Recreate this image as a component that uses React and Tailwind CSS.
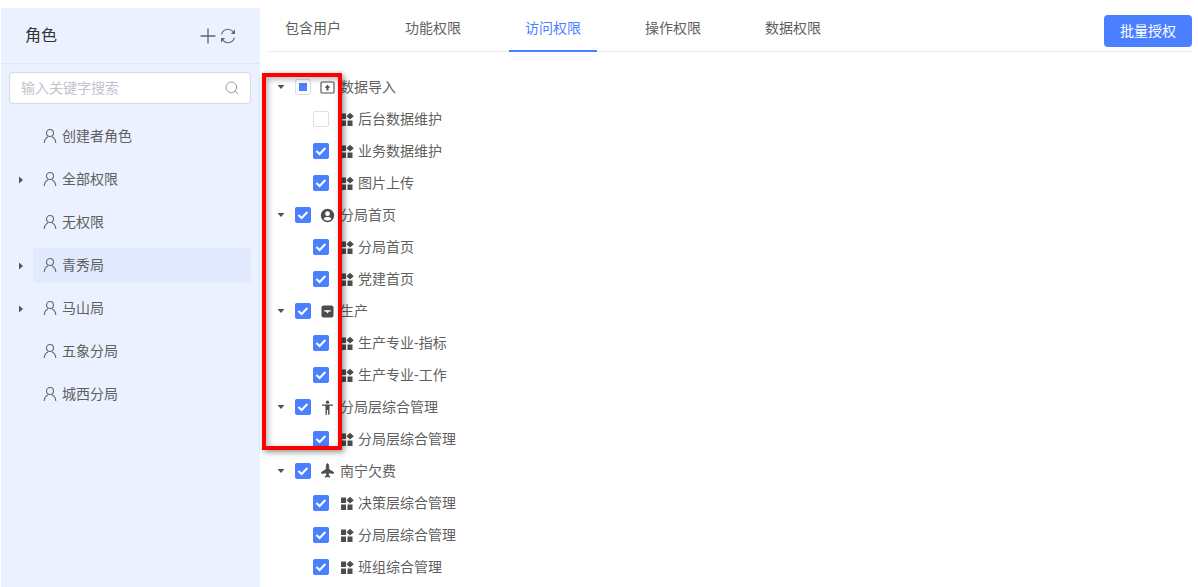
import React from 'react';
import { Plus, Search, Plane } from 'lucide-react';

const roles = [
  { name: '创建者角色' },
  { name: '全部权限', arrow: true },
  { name: '无权限' },
  { name: '青秀局', arrow: true, active: true },
  { name: '马山局', arrow: true },
  { name: '五象分局' },
  { name: '城西分局' },
];

const tabs = ['包含用户', '功能权限', '访问权限', '操作权限', '数据权限'];

const tree = [
  {
    name: '数据导入', icon: 'upload', state: 'half',
    children: [
      { name: '后台数据维护', state: 'off' },
      { name: '业务数据维护' },
      { name: '图片上传' },
    ],
  },
  { name: '分局首页', icon: 'user', children: [{ name: '分局首页' }, { name: '党建首页' }] },
  { name: '生产', icon: 'box', children: [{ name: '生产专业-指标' }, { name: '生产专业-工作' }] },
  { name: '分局层综合管理', icon: 'man', children: [{ name: '分局层综合管理' }] },
  {
    name: '南宁欠费', icon: 'plane',
    children: [{ name: '决策层综合管理' }, { name: '分局层综合管理' }, { name: '班组综合管理' }],
  },
];

const Caret = ({ dir }) => (
  <svg width="8" height="8" viewBox="0 0 8 8" className="text-[#555]">
    {dir === 'right' ? <path d="M2 0.5 L6 4 L2 7.5 Z" fill="currentColor" /> : <path d="M0.5 2 L7.5 2 L4 6 Z" fill="currentColor" />}
  </svg>
);

const Checkbox = ({ state = 'on' }) => {
  if (state === 'on') {
    return (
      <span className="flex w-4 h-4 items-center justify-center rounded-[2px] bg-[#4a7fff]">
        <svg width="16" height="16" viewBox="0 0 16 16">
          <path d="M3.4 8 L6.6 11 L12.4 5" fill="none" stroke="#fff" strokeWidth="2" />
        </svg>
      </span>
    );
  }
  return (
    <span className="flex w-4 h-4 items-center justify-center rounded-[2px] border border-[#dcdfe6] bg-white">
      {state === 'half' && <span className="w-2 h-2 bg-[#4a7fff]" />}
    </span>
  );
};

const AppIcon = () => (
  <svg width="15" height="15" viewBox="0 0 15 15" className="text-[#4d4d4d]">
    <path d="M2 1.5h5v5.5H2z M2 8.5h5v5.5H2z M8.5 8.5h5v5.5h-5z M11 0.8 L14.8 4.2 L11 7.6 L7.4 4.2 Z" fill="currentColor" />
  </svg>
);

const ParentIcon = ({ type }) => {
  if (type === 'upload') {
    return (
      <svg width="15" height="15" viewBox="0 0 15 15" className="text-[#4d4d4d]">
        <rect x="1" y="2" width="13" height="11" rx="1" fill="none" stroke="currentColor" strokeWidth="1.1" />
        <path d="M7.5 4.8 L10.3 7.8 L8.5 7.8 L8.5 10.6 L6.5 10.6 L6.5 7.8 L4.7 7.8 Z" fill="currentColor" />
      </svg>
    );
  }
  if (type === 'user') {
    return (
      <svg width="15" height="15" viewBox="0 0 15 15" className="text-[#4d4d4d]">
        <path fillRule="evenodd" d="M7.5 .8a6.7 6.7 0 1 0 0 13.4 6.7 6.7 0 0 0 0-13.4z M7.5 3.3a2.4 2.4 0 1 1 0 4.8 2.4 2.4 0 0 1 0-4.8z M3.6 11c.5-1.4 2-2 3.9-2s3.4.6 3.9 2a5.2 5.2 0 0 1-7.8 0z" fill="currentColor" />
      </svg>
    );
  }
  if (type === 'box') {
    return (
      <svg width="15" height="15" viewBox="0 0 15 15" className="text-[#4d4d4d]">
        <rect x="1.5" y="1.5" width="12" height="12" rx="2" fill="currentColor" />
        <path d="M4.2 6.2 h6.6 v1.2 h-1.9 l-1.4 2 -1.4 -2 h-1.9 z" fill="#fff" />
      </svg>
    );
  }
  if (type === 'man') {
    return (
      <svg width="15" height="15" viewBox="0 0 15 15" className="text-[#4d4d4d]">
        <circle cx="7.5" cy="2.2" r="1.6" fill="currentColor" />
        <path d="M2 4.4 h11 v1.4 h-3.5 v9 h-1.4 v-4.8 h-1.2 v4.8 h-1.4 v-9 h-3.5 z" fill="currentColor" />
      </svg>
    );
  }
  return <Plane size={15} fill="currentColor" strokeWidth={1} className="text-[#4d4d4d] -rotate-45" />;
};

const PersonIcon = () => (
  <svg width="14" height="16" viewBox="0 0 14 16" fill="none" stroke="currentColor" strokeWidth="1.1" className="text-[#666]">
    <circle cx="7" cy="5" r="3.5" />
    <path d="M1.2 15 C1.4 11.5 3.6 9.6 5 9 M12.8 15 C12.6 11.5 10.4 9.6 9 9" />
  </svg>
);

const RefreshIcon = () => (
  <svg width="16" height="16" viewBox="0 0 16 16" className="text-[#666]">
    <path d="M1.6 6.4 A6.6 6.6 0 0 1 13 3.6 M14.4 9.6 A6.6 6.6 0 0 1 3 12.4" fill="none" stroke="currentColor" strokeWidth="1.1" />
    <path d="M15 1.6 L15 6 L10.8 6 Z M1 14.4 L1 10 L5.2 10 Z" fill="currentColor" />
  </svg>
);

const TreeGroup = ({ node }) => (
  <div>
    <div className="flex h-8 items-center pl-[8px]">
      <span className="flex w-[8px] justify-center"><Caret /></span>
      <span className="ml-[10px]"><Checkbox state={node.state} /></span>
      <span className="ml-[9px]"><ParentIcon type={node.icon} /></span>
      <span className="ml-[5px] text-[#5f5f5f]">{node.name}</span>
    </div>
    {node.children.map((child, i) => (
      <div key={i} className="flex h-8 items-center pl-[44px]">
        <Checkbox state={child.state} />
        <span className="ml-[10px]"><AppIcon /></span>
        <span className="ml-[4px] text-[#5f5f5f]">{child.name}</span>
      </div>
    ))}
  </div>
);

export default function App() {
  return (
    <div className="flex h-[587px] w-[1198px] overflow-hidden bg-white text-sm font-['Liberation_Sans','Noto_Sans_CJK_SC',sans-serif]">
      <aside className="ml-px mt-2 w-[259px] shrink-0 bg-[#ebf1fe]">
        <div className="flex h-[56px] items-center justify-between border-b border-[#e3e6ec] pl-6 pr-[24px]">
          <span className="text-base text-[#333]">角色</span>
          <div className="flex items-center gap-[2px] text-[#666]">
            <Plus size={24} strokeWidth={1.3} className="-mr-[2px]" />
            <RefreshIcon />
          </div>
        </div>
        <div className="ml-2 mr-[9px] mt-2 flex h-8 items-center justify-between rounded border border-[#d6d9e0] bg-white pl-[11px] pr-[10px]">
          <span className="text-[#c0c4cc]">输入关键字搜索</span>
          <Search size={16} strokeWidth={1.5} className="text-[#999]" />
        </div>
        <div className="mt-[15px] flex flex-col gap-2 pr-[9px]">
          {roles.map((role) => (
            <div key={role.name} className="flex h-[35px] items-center">
              <span className="flex w-[32px] shrink-0 justify-center pl-[8px]">
                {role.arrow && <Caret dir="right" />}
              </span>
              <div className={`flex h-full flex-1 items-center rounded-[2px] pl-[10px] pb-[1px] text-[#5f5f5f] ${role.active ? 'bg-[#e1e9fd]' : ''}`}>
                <PersonIcon />
                <span className="ml-[5px]">{role.name}</span>
              </div>
            </div>
          ))}
        </div>
      </aside>

      <main className="relative flex-1 pl-[9px] pr-[6px]">
        <div className="flex h-[52px] items-end justify-between border-b border-[#e4e7ed]">
          <div className="flex gap-8">
            {tabs.map((tab) => (
              <div
                key={tab}
                className={`-mb-px flex h-[45px] w-[88px] items-center justify-center border-b-2 pb-[2px] ${tab === '访问权限' ? 'border-[#4a7fff] text-[#4a7fff]' : 'border-transparent text-[#5f5f5f]'}`}
              >
                {tab}
              </div>
            ))}
          </div>
          <button className="mb-[4px] h-8 w-[88px] rounded bg-[#4a7fff] text-white">批量授权</button>
        </div>
        <div className="pt-[19px]">
          {tree.map((node) => (
            <TreeGroup key={node.name} node={node} />
          ))}
        </div>
        <div className="absolute left-[2px] top-[73px] h-[377px] w-[80px] border-4 border-[#ff0000] shadow-[2px_2px_6px_rgba(0,0,0,0.45),inset_2px_2px_6px_rgba(0,0,0,0.3)]" />
      </main>
    </div>
  );
}
